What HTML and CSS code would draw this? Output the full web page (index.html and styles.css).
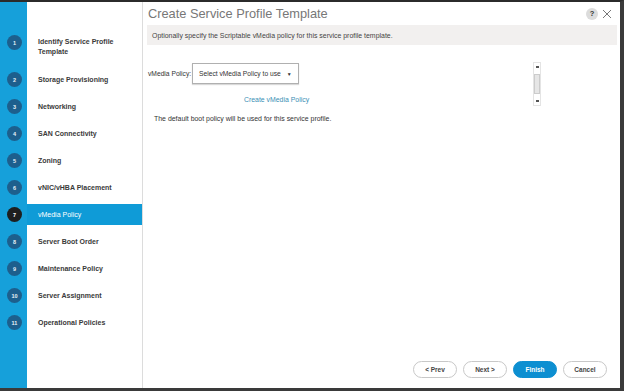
FILE: index.html
```html
<!DOCTYPE html>
<html>
<head>
<meta charset="utf-8">
<link rel="stylesheet" href="styles.css">
</head>
<body>
<div class="window">
  <nav class="sidebar">
    <div class="step two"><span class="num">1</span><span class="label">Identify Service Profile<br>Template</span></div>
    <div class="step"><span class="num">2</span><span class="label">Storage Provisioning</span></div>
    <div class="step"><span class="num">3</span><span class="label">Networking</span></div>
    <div class="step"><span class="num">4</span><span class="label">SAN Connectivity</span></div>
    <div class="step"><span class="num">5</span><span class="label">Zoning</span></div>
    <div class="step"><span class="num">6</span><span class="label">vNIC/vHBA Placement</span></div>
    <div class="step active"><span class="num">7</span><span class="label">vMedia Policy</span></div>
    <div class="step"><span class="num">8</span><span class="label">Server Boot Order</span></div>
    <div class="step"><span class="num">9</span><span class="label">Maintenance Policy</span></div>
    <div class="step"><span class="num">10</span><span class="label">Server Assignment</span></div>
    <div class="step"><span class="num">11</span><span class="label">Operational Policies</span></div>
  </nav>
  <main class="main">
    <header class="titlebar">
      <h1 class="title">Create Service Profile Template</h1>
      <span class="help">?</span>
      <svg class="close" width="10" height="10" viewBox="0 0 10 10"><path d="M1 1L9 9M9 1L1 9" stroke="#777" stroke-width="1" fill="none"/></svg>
    </header>
    <div class="info">Optionally specify the Scriptable vMedia policy for this service profile template.</div>
    <div class="body">
      <div class="form">
        <div class="field">
          <span class="flabel">vMedia Policy:</span>
          <span class="select">Select vMedia Policy to use <span class="caret">▼</span></span>
        </div>
        <div class="link">Create vMedia Policy</div>
        <p class="note">The default boot policy will be used for this service profile.</p>
      </div>
      <div class="scroll">
        <span class="arrow up"></span>
        <span class="thumb"></span>
        <span class="arrow down"></span>
      </div>
    </div>
    <footer class="buttons">
      <span class="btn">&lt; Prev</span>
      <span class="btn">Next &gt;</span>
      <span class="btn primary">Finish</span>
      <span class="btn">Cancel</span>
    </footer>
  </main>
</div>
</body>
</html>
```
FILE: styles.css
```css
html, body {
  margin: 0;
  padding: 0;
  background: #2b2b2b;
}
.window {
  box-sizing: border-box;
  width: 624px;
  height: 391px;
  border-top: 2px solid #2b2b2b;
  border-right: 4px solid #3a3a3a;
  border-bottom: 3px solid #3a3a3a;
  display: flex;
  background: #fff;
  font-family: "Liberation Sans", Arial, sans-serif;
}
.sidebar {
  width: 143px;
  flex: none;
  box-sizing: border-box;
  border-right: 1px solid #dcdcdc;
  background: linear-gradient(to right, #16a0da 27px, #fff 27px);
  padding-top: 30px;
  display: flex;
  flex-direction: column;
  gap: 6px;
}
.step {
  display: flex;
  align-items: center;
  height: 21px;
}
.step.two {
  height: 31px;
  align-items: flex-start;
}
.num {
  width: 15px;
  height: 15px;
  margin: 0 5px 0 7px;
  border-radius: 50%;
  background: #1d5f8d;
  color: #e8f2f8;
  font-size: 5.5px;
  font-weight: bold;
  display: flex;
  align-items: center;
  justify-content: center;
  flex: none;
}
.step.two .num {
  margin-top: 3px;
}
.label {
  flex: 1;
  align-self: stretch;
  display: flex;
  align-items: center;
  padding-left: 11px;
  font-size: 7px;
  font-weight: bold;
  color: #3a3a3a;
  line-height: 10px;
}
.step.two .label {
  align-items: flex-start;
  padding-top: 5px;
}
.step.active .label {
  background: #0f9bd7;
  color: #fff;
  font-weight: normal;
}
.step.active .num {
  background: #1e1e1e;
  color: #fff;
}
.main {
  flex: 1;
  display: flex;
  flex-direction: column;
  padding: 0 3px 10px 4px;
}
.titlebar {
  display: flex;
  align-items: center;
  height: 23px;
}
.title {
  margin: 0;
  flex: 1;
  font-size: 12.8px;
  font-weight: normal;
  color: #777;
  padding-left: 1px;
}
.help {
  width: 12px;
  height: 12px;
  border-radius: 50%;
  background: #dcdcdc;
  color: #333;
  font-size: 7.5px;
  font-weight: bold;
  display: flex;
  align-items: center;
  justify-content: center;
  margin-right: 4px;
}
.close {
  margin-right: 5px;
}
.info {
  height: 20px;
  background: #f2f0ef;
  font-size: 6.95px;
  color: #444;
  display: flex;
  align-items: center;
  padding-left: 5px;
}
.body {
  display: flex;
  padding-top: 17px;
}
.form {
  width: 386px;
}
.field {
  display: flex;
  align-items: center;
  height: 21px;
  margin-top: 1px;
}
.flabel {
  font-size: 6.7px;
  color: #333;
  width: 44px;
  padding-left: 1px;
}
.select {
  box-sizing: border-box;
  width: 107px;
  height: 21px;
  border: 1px solid #b0b0b0;
  box-shadow: 0 1px 1px rgba(0,0,0,0.15);
  font-size: 6.7px;
  color: #333;
  display: flex;
  align-items: center;
  padding-left: 6px;
}
.caret {
  font-size: 5px;
  margin-left: 6px;
}
.link {
  font-size: 6.9px;
  color: #3a8fb5;
  padding-left: 97px;
  margin-top: 12px;
}
.note {
  margin: 12px 0 0 7px;
  font-size: 6.95px;
  color: #333;
}
.scroll {
  width: 8px;
  height: 44px;
  box-sizing: border-box;
  border: 1px solid #e4e4e4;
  display: flex;
  flex-direction: column;
  align-items: center;
  justify-content: space-between;
  padding: 3px 0;
}
.arrow {
  width: 3px;
  height: 2px;
  background: #555;
}
.thumb {
  width: 6px;
  height: 20px;
  background: #e6e6e6;
  border: 1px solid #ccc;
  box-sizing: border-box;
}
.buttons {
  margin-top: auto;
  display: flex;
  justify-content: flex-end;
  gap: 6px;
  padding-right: 10px;
}
.btn {
  box-sizing: border-box;
  width: 44px;
  height: 17px;
  border: 1px solid #c8c8c8;
  border-radius: 9px;
  font-size: 6.5px;
  font-weight: bold;
  color: #444;
  display: flex;
  align-items: center;
  justify-content: center;
  background: #fff;
}
.btn.primary {
  background: #0d8fd1;
  border-color: #0d8fd1;
  color: #fff;
}
```
